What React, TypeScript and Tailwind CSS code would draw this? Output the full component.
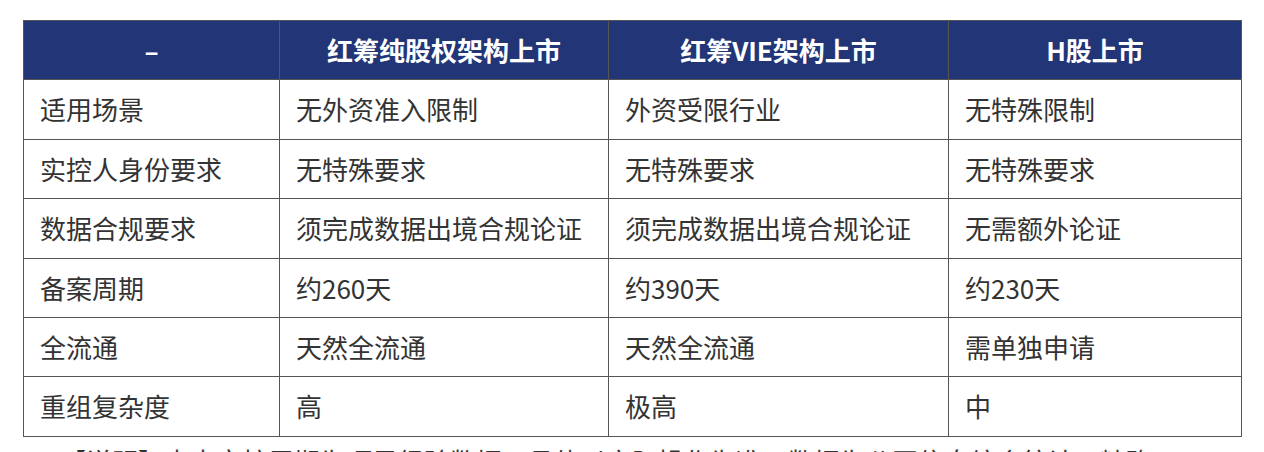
import React from 'react';

type Row = [string, string, string, string];

const HEADERS: Row = ['–', '红筹纯股权架构上市', '红筹VIE架构上市', 'H股上市'];

const ROWS: Row[] = [
  ['适用场景', '无外资准入限制', '外资受限行业', '无特殊限制'],
  ['实控人身份要求', '无特殊要求', '无特殊要求', '无特殊要求'],
  ['数据合规要求', '须完成数据出境合规论证', '须完成数据出境合规论证', '无需额外论证'],
  ['备案周期', '约260天', '约390天', '约230天'],
  ['全流通', '天然全流通', '天然全流通', '需单独申请'],
  ['重组复杂度', '高', '极高', '中'],
];

const font = { fontFamily: '"Noto Sans CJK SC", "Noto Sans", sans-serif' };

const App: React.FC = () => {
  return (
    <div className="min-h-screen bg-white pt-[20px] pl-[23px]" style={font}>
      <table className="w-[1218px] table-fixed border-collapse text-[26px] leading-[38.4px]">
        <colgroup>
          <col className="w-[256px]" />
          <col className="w-[329px]" />
          <col className="w-[340px]" />
          <col className="w-[293px]" />
        </colgroup>
        <thead>
          <tr className="bg-[#213577]">
            {HEADERS.map((h, i) => (
              <th
                key={i}
                className="border border-[#555555] py-[10px] px-4 text-center font-bold text-white"
              >
                {h}
              </th>
            ))}
          </tr>
        </thead>
        <tbody>
          {ROWS.map((row, r) => (
            <tr key={r}>
              {row.map((cell, c) => (
                <td
                  key={c}
                  className="border border-[#555555] py-[10px] px-4 text-left text-[#333333] whitespace-nowrap"
                >
                  {cell}
                </td>
              ))}
            </tr>
          ))}
        </tbody>
      </table>

      {/* note under the table, cut off by the window */}
      <p className="mt-[4px] pl-[17px] text-[26px] leading-[40px] text-[#333333] whitespace-nowrap">
        <span className="mr-[6px] text-[14px] align-middle">•</span>
        【说明】表中审核周期为项目经验数据，具体以实际操作为准，数据为公开信息综合统计，精确
      </p>
    </div>
  );
};

export default App;
